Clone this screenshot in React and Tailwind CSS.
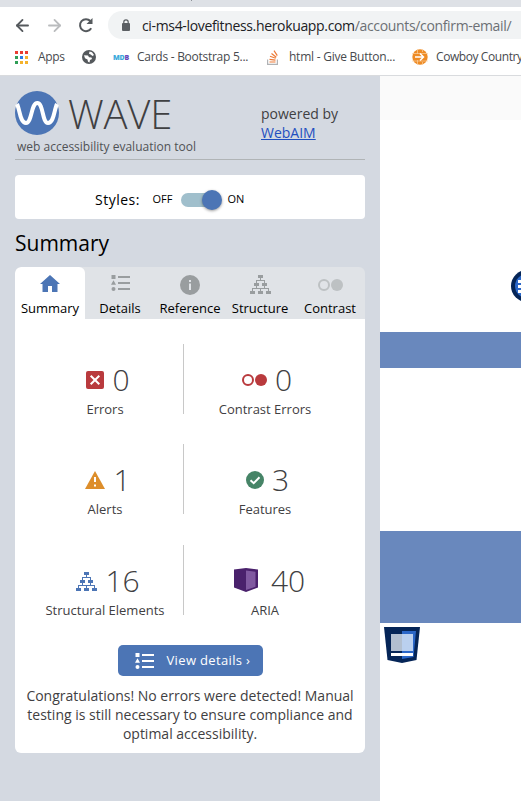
import React from "react";
import { ArrowLeft, ArrowRight } from "lucide-react";

function TreeIcon({ className }) {
  return (
    <svg width="21" height="19" viewBox="0 0 21 19" className={className} fill="none" shapeRendering="crispEdges">
      <path fill="currentColor" d="M8 0h5v3H8zM4 8h5v3H4zM12 8h5v3h-5zM0 16h5v3H0zM8 16h5v3H8zM16 16h5v3h-5z" />
      <path stroke="currentColor" d="M10.500 3v3M6.500 8V5.500h8V8M6.500 11v2.500M14.500 11v2.500M2.500 16v-2.500h16V16M10.500 13v3" />
    </svg>
  );
}

function ListIcon({ className }) {
  return (
    <svg width="19" height="16" viewBox="0 0 19 16" className={className} fill="currentColor">
      <path d="M0.500 0h4v4h-4zM2.500 5.200l2.500 4.600H0zM7 1h12v2H7zM7 7h12v2H7zM7 13h12v2H7z" />
      <circle cx="2.500" cy="14" r="2" />
    </svg>
  );
}

function ContrastIcon({ className }) {
  return (
    <svg width="25" height="12" viewBox="0 0 25 12" className={className} fill="none">
      <circle cx="6" cy="6" r="5" stroke="currentColor" strokeWidth="2" />
      <circle cx="19" cy="6" r="6" fill="currentColor" />
    </svg>
  );
}

function HomeIcon() {
  return (
    <svg width="20" height="17" viewBox="0 0 20 17" className="-mt-[3px] text-[#4c75b5]" fill="currentColor">
      <path d="M10 0l10 9h-2.500v8h-5.500v-6H8v6H2.500V9H0z" />
    </svg>
  );
}

function InfoIcon() {
  return (
    <svg width="20" height="20" viewBox="0 0 20 20">
      <circle cx="10" cy="10" r="10" fill="#999d9f" />
      <path fill="#e0e3e7" d="M9 5h2v2H9zM9 8.500h2V15H9z" />
    </svg>
  );
}

function ErrorIcon() {
  return (
    <svg width="18" height="18" viewBox="0 0 18 18">
      <rect width="18" height="18" rx="2" fill="#b93a3d" />
      <path d="M4.700 4.700l8.600 8.600M13.300 4.700l-8.600 8.600" stroke="#fff" strokeWidth="2" />
    </svg>
  );
}

function AlertIcon() {
  return (
    <svg width="20" height="18" viewBox="0 0 20 18">
      <path d="M10 0l10 18H0z" fill="#dd8e2b" />
      <path d="M9 6h2v5H9zM9 13.500h2v2H9z" fill="#fff" />
    </svg>
  );
}

function FeatureIcon() {
  return (
    <svg width="18" height="18" viewBox="0 0 18 18">
      <circle cx="9" cy="9" r="9" fill="#468467" />
      <path d="M4.500 9.200l3.200 3 5.800-5.900" stroke="#fff" strokeWidth="2" fill="none" />
    </svg>
  );
}

function AriaIcon() {
  return (
    <svg width="24" height="24" viewBox="0 0 24 24" className="-mt-[2px]">
      <path d="M0 1.500L12 0l12 1.500V19.500L12 24 0 19.500z" fill="#4a216c" />
      <path d="M12 2.500l9.500 1.200v15L12 22z" fill="#8059a0" />
    </svg>
  );
}

const tabs = [
  { label: "Summary", icon: <HomeIcon />, active: true },
  { label: "Details", icon: <ListIcon className="-mt-[4px] text-[#999d9f]" /> },
  { label: "Reference", icon: <InfoIcon /> },
  { label: "Structure", icon: <TreeIcon className="-mt-px text-[#999d9f]" /> },
  { label: "Contrast", icon: <ContrastIcon className="text-[#bdc1c3]" /> },
];

function Stat({ icon, count, label, gap = "gap-2", shift = "pl-[6px]" }) {
  return (
    <div className="flex flex-col items-center pt-[20px]">
      <div className={`flex h-[32px] items-center ${gap} ${shift}`}>
        {icon}
        <span className="text-[30px] leading-[32px] font-[350]">{count}</span>
      </div>
      <span className="mt-[4px] text-[13px] leading-[18px] whitespace-nowrap">{label}</span>
    </div>
  );
}

function StatRow({ left, right }) {
  return (
    <div className="flex h-[70px]">
      <div className="box-content flex w-[152px] justify-center border-r border-[#c8c8c8] pr-px">
        <div className="-ml-[2px]">{left}</div>
      </div>
      <div className="flex w-[162px] justify-center">{right}</div>
    </div>
  );
}

function Bookmark({ icon, children, className, textClass }) {
  return (
    <div className={`flex items-center whitespace-nowrap ${className}`}>
      {icon}
      <span className={textClass}>{children}</span>
    </div>
  );
}

function Browser() {
  return (
    <header className="h-[76px] shrink-0 border-b border-[#d9dbde] bg-white">
      <div className="h-[7px] bg-[#dee1e6] pl-[191px]">
        <div className="h-px w-px bg-[#8e9297]" />
      </div>
      <div className="flex h-9 items-center">
        <ArrowLeft className="ml-[12.500px] size-[19px] shrink-0 text-[#55595d]" strokeWidth={2.300} />
        <ArrowRight className="ml-[13px] size-[19px] shrink-0 text-[#babcbe]" strokeWidth={2.300} />
        <svg width="16" height="16" viewBox="0 0 16 16" className="ml-[14.500px] shrink-0" fill="none">
          <path d="M13.200 11.200A6 6 0 1 1 12.400 4" stroke="#55595d" strokeWidth="2" />
          <path d="M14.500 1v6h-6z" fill="#55595d" />
        </svg>
        <div className="ml-[14px] flex h-7 flex-1 items-center rounded-l-full bg-[#f1f3f4] pl-[14px]">
          <svg width="8" height="12" viewBox="0 0 8 12" className="shrink-0" fill="none">
            <rect y="4" width="8" height="8" rx="1" fill="#5b5f63" />
            <path d="M1.800 5V3a2.200 2.200 0 0 1 4.400 0v2" stroke="#5b5f63" strokeWidth="1.200" />
          </svg>
          <span className="ml-3 text-[14px] tracking-[-0.340px] whitespace-nowrap text-[#202124]">
            ci-ms4-lovefitness.herokuapp.com<span className="text-[#6c7074]">/accounts/confirm-email/</span>
          </span>
        </div>
      </div>
      <div className="flex h-[28px] items-center overflow-hidden text-[12px] text-[#474a4e]">
        <Bookmark
          className="ml-[15px] gap-[10px]"
          icon={
            <svg width="13" height="13" viewBox="0 0 13 13" shapeRendering="crispEdges">
              <path fill="#e93d32" d="M0 0h3v3H0zM5 0h3v3H5zM10 0h3v3h-3z" />
              <path fill="#2f9e56" d="M0 5h3v3H0zM0 10h3v3H0z" />
              <path fill="#2b7de9" d="M5 5h3v3H5z" />
              <path fill="#f4b22c" d="M10 5h3v3h-3zM5 10h3v3H5zM10 10h3v3h-3z" />
            </svg>
          }
          textClass="w-[27px] tracking-[-0.300px]"
        >
          Apps
        </Bookmark>
        <svg width="14" height="14" viewBox="0 0 14 14" className="ml-[17px] shrink-0">
          <circle cx="7" cy="7" r="7" fill="#55595d" />
          <path d="M2 5.200l4 .2 1 1.800 2.500.3.500 1.600-2 1-.5 2.300-1.500-.7-.5-2.200L3 8.300zM7.500 1.500l2.500.8 2 2.700-1.500 1-1.800-1.500L7 3.800z" fill="#fff" />
        </svg>
        <Bookmark
          className="ml-[17px] gap-[8px]"
          icon={
            <span className="w-4 text-[7px] leading-none font-extrabold tracking-[-0.200px] text-[#3ba9db]">
              MD<span className="text-[#6549b9]">B</span>
            </span>
          }
          textClass="w-[111px] tracking-[-0.270px]"
        >
          Cards - Bootstrap 5...
        </Bookmark>
        <Bookmark
          className="ml-[19px] gap-[11px]"
          icon={
            <svg width="11" height="15" viewBox="0 0 11 15" fill="none" strokeWidth="1.200">
              <path d="M0.600 9.500v4.800h9.800V9.500" stroke="#b0b2b5" />
              <path d="M2.500 12h6M2.500 9.300l6 .8M3 6.300l5.700 2M4.500 3.500l4.800 3.700M7 .7l3.300 5" stroke="#ed7a36" />
            </svg>
          }
          textClass="w-[106px] tracking-[-0.240px]"
        >
          html - Give Button...
        </Bookmark>
        <Bookmark
          className="ml-[17px] gap-[8px]"
          icon={
            <svg width="16" height="16" viewBox="0 0 16 16" fill="none" className="shrink-0">
              <circle cx="8" cy="8" r="7.700" fill="#ee8b25" />
              <path d="M0 4.500h16M0 12h16M5.500 0v5M5.500 11v5M10.500 0v3M10.500 13v3" stroke="#fbd09d" strokeWidth=".7" />
              <path d="M3 8h8M8 4.500L11.500 8 8 11.500" stroke="#fff" strokeWidth="1.500" />
            </svg>
          }
          textClass="tracking-[-0.420px]"
        >
          Cowboy Country
        </Bookmark>
      </div>
    </header>
  );
}

function Sidebar() {
  return (
    <aside className="w-[380px] shrink-0 bg-[#d4d9e1] px-[15px] pt-[15px] text-[#3f4042]">
      <div className="flex h-[69px] justify-between border-b border-[#b0b4b6]">
        <div>
          <div className="flex h-[44px] items-center">
            <svg width="44" height="44" viewBox="0 0 44 44" fill="none">
              <circle cx="22" cy="22" r="22" fill="#4c75b5" />
              <path d="M2 13C5 19 5 32 11 32S16 12 22.300 12 27 32 33 32 39 19 42 13" stroke="#fff" strokeWidth="4" />
            </svg>
            <span className="mt-[2px] ml-[9px] text-[40px] leading-none font-light tracking-[-0.200px]">WAVE</span>
          </div>
          <p className="mt-[3px] ml-[2px] text-[12px] leading-[18px] whitespace-nowrap text-[#505255]">web accessibility evaluation tool</p>
        </div>
        <div className="w-[104px] pt-[13px] text-[14px] leading-[19px]">
          powered by
          <br />
          <a className="text-[#1f4fc0] underline">WebAIM</a>
        </div>
      </div>

      <div className="mt-[15px] flex h-[44px] items-center rounded bg-white pt-[5px] pl-[80px] text-black">
        <span className="w-[45px] text-[14px] tracking-[0.500px] whitespace-nowrap">Styles:</span>
        <span className="ml-[12.500px] w-[21px] text-[11px]">OFF</span>
        <div className="ml-[7.500px] flex h-[14px] w-[40px] items-center justify-end rounded-full bg-[#a0bfcc]">
          <div className="-mr-px size-[20px] shrink-0 rounded-full bg-[#4c75b5] shadow-[0_1px_3px_rgba(0,0,0,0.4)]" />
        </div>
        <span className="ml-[6.500px] text-[11px]">ON</span>
      </div>

      <h1 className="mt-[10px] h-[38px] text-[21px] leading-[28px] font-[370] text-black">Summary</h1>

      <div className="flex h-[52px] overflow-hidden rounded-t-md bg-[#e0e3e7]">
        {tabs.map((t) => (
          <div
            key={t.label}
            className={`flex w-[70px] flex-col items-center text-[13px] text-black ${t.active ? "rounded-t-md bg-white" : ""}`}
          >
            <div className="flex h-[34px] items-center pt-[2px]">{t.icon}</div>
            <span className="leading-[14px]">{t.label}</span>
          </div>
        ))}
      </div>

      <div className="h-[434px] rounded-b-md bg-white px-[15px] pt-[25px]">
        <div className="flex flex-col gap-[30px]">
          <StatRow
            left={<Stat icon={<ErrorIcon />} count="0" label="Errors" />}
            right={<Stat icon={<ContrastIcon className="text-[#b93a3d]" />} count="0" label="Contrast Errors" shift="pl-[4px]" />}
          />
          <StatRow
            left={<Stat icon={<AlertIcon />} count="1" label="Alerts" />}
            right={<Stat icon={<FeatureIcon />} count="3" label="Features" shift="pl-[5px]" />}
          />
          <div className="pt-px">
            <StatRow
              left={<Stat icon={<TreeIcon className="text-[#4c75b5]" />} count="16" label="Structural Elements" />}
              right={<Stat icon={<AriaIcon />} count="40" label="ARIA" gap="gap-[13px]" shift="pl-[9px]" />}
            />
          </div>
        </div>
        <button className="mx-auto mt-[30px] flex h-[31px] w-[145px] items-center rounded-[5px] bg-[#4c75b5] pl-[17px] text-white">
          <ListIcon className="text-white" />
          <span className="ml-[13px] text-[13px] tracking-[0.350px] whitespace-nowrap">View details ›</span>
        </button>
        <p className="-mx-[8px] mt-[10px] text-center text-[14px] leading-[19px]">
          Congratulations! No errors were detected! Manual testing is still necessary to ensure compliance and optimal accessibility.
        </p>
      </div>
    </aside>
  );
}

function Page() {
  return (
    <main className="flex min-w-0 flex-1 flex-col overflow-hidden bg-white">
      <div className="h-[44px] bg-[#fafafa]" />
      <div className="flex h-[212px] justify-end overflow-hidden pt-[150px]">
        <svg width="10" height="32" viewBox="0 0 10 32" fill="none">
          <circle cx="16" cy="16" r="16" fill="#052557" />
          <circle cx="16" cy="16" r="12" fill="#2b67c8" />
          <path d="M7 10h3v3H7zM7 15h3v3H7zM7 20h3v3H7z" fill="#fff" />
        </svg>
      </div>
      <div className="h-[36px] bg-[#6988bd]" />
      <div className="h-[163px]" />
      <div className="h-[92px] bg-[#6988bd]" />
      <svg width="36" height="36" viewBox="0 0 36 36" className="mt-1 ml-1">
        <path d="M0 0h36l-3.500 33L18 36 3.500 33z" fill="#052557" />
        <path d="M18 4h14l-2.500 26L18 32z" fill="#2b67c8" />
        <path d="M7 7h11v17H7z" fill="#b2bfd0" />
        <path d="M18 7h11v17H18z" fill="#bad0ef" />
        <path d="M7 26h22v3H7z" fill="#fff" />
      </svg>
    </main>
  );
}

export default function App() {
  return (
    <div className="flex h-[801px] w-[521px] flex-col overflow-hidden font-['Open_Sans','Noto_Sans',sans-serif]">
      <Browser />
      <div className="flex min-h-0 flex-1">
        <Sidebar />
        <Page />
      </div>
    </div>
  );
}
